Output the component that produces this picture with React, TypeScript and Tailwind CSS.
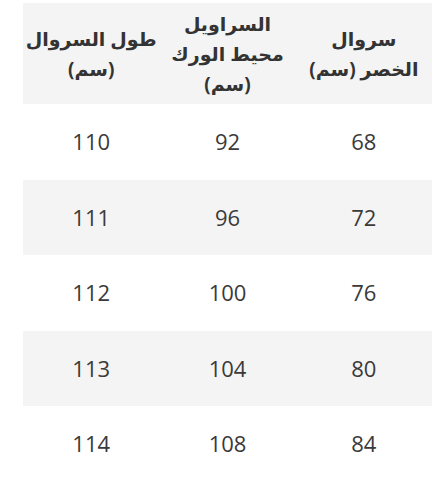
const headers = [
  ["سروال", "الخصر (سم)"],
  ["السراويل", "محيط الورك", "(سم)"],
  ["طول السروال", "(سم)"],
];

const rows = [
  ["68", "92", "110"],
  ["72", "96", "111"],
  ["76", "100", "112"],
  ["80", "104", "113"],
  ["84", "108", "114"],
];

export default function App() {
  return (
    <div className="min-h-[500px] bg-white pt-[3px] pl-[23px]">
      <div dir="rtl" className="w-[409px] text-[#333333]">
        {/* header */}
        <div className="grid h-[101px] grid-cols-3 bg-[#f4f4f4]">
          {headers.map((lines, i) => (
            <div
              key={i}
              className="flex flex-col items-center justify-center text-center text-[19px] font-bold leading-[30px] whitespace-nowrap"
              style={{ fontFamily: '"Noto Sans", "DejaVu Sans", sans-serif' }}
            >
              {lines.map((l, j) => (
                <span key={j}>{l}</span>
              ))}
            </div>
          ))}
        </div>
        {/* body */}
        {rows.map((r, i) => (
          <div
            key={i}
            className={
              "grid h-[75.5px] grid-cols-3 " + (i % 2 === 1 ? "bg-[#f4f4f4]" : "bg-white")
            }
          >
            {r.map((v, j) => (
              <div
                key={j}
                className="flex items-center justify-center text-[22px] text-[#3a3a3a]"
                style={{ fontFamily: '"Open Sans", sans-serif' }}
              >
                {v}
              </div>
            ))}
          </div>
        ))}
      </div>
    </div>
  );
}
